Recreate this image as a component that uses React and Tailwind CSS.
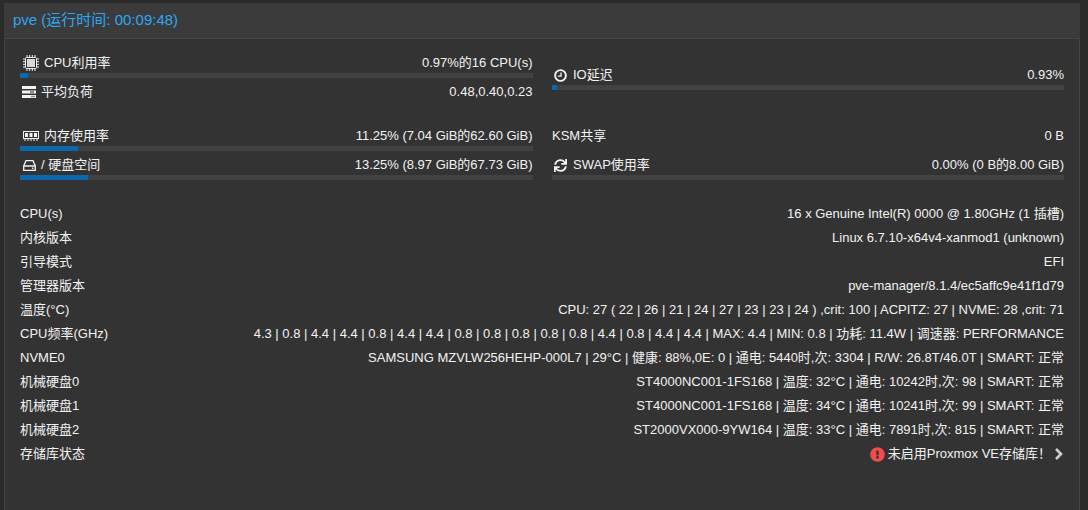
import { FaSync, FaExclamationCircle } from "react-icons/fa";

const fontStack = "font-['Liberation_Sans','Noto_Sans_CJK_SC',sans-serif]";

function ChipIcon() {
  return (
    <svg width="16" height="16" viewBox="0 0 16 16" className="ml-[3px] mr-[5px]">
      <rect x="2.5" y="2.5" width="11" height="11" rx="1" fill="#2f2f2f" stroke="#f2f2f2" />
      <rect x="4" y="4" width="8" height="8" fill="#d8d8d8" />
      <path d="M4 0v2M6.7 0v2M9.3 0v2M12 0v2M4 14v2M6.7 14v2M9.3 14v2M12 14v2M0 4h2M0 6.7h2M0 9.3h2M0 12h2M14 4h2M14 6.7h2M14 9.3h2M14 12h2" stroke="#f2f2f2" strokeWidth="1" />
    </svg>
  );
}

function LoadIcon() {
  return (
    <svg width="14" height="12" viewBox="0 0 14 12" className="ml-[2px] mr-[5px]">
      <rect y="0" width="14" height="3" fill="#f2f2f2" />
      <rect y="4.5" width="14" height="3" fill="#f2f2f2" />
      <rect y="9" width="14" height="3" fill="#f2f2f2" />
      <rect x="8" y="4.5" width="4" height="3" fill="#8a8a8a" />
      <rect x="9" y="9.8" width="4" height="1.4" fill="#8a8a8a" />
    </svg>
  );
}

function MemoryIcon() {
  return (
    <svg width="16" height="10" viewBox="0 0 16 10" className="ml-[3px] mr-[5px]">
      <rect x="0.5" y="0.5" width="15" height="7" fill="none" stroke="#f2f2f2" />
      <rect x="2" y="2" width="3" height="4" fill="#f2f2f2" />
      <rect x="6.5" y="2" width="3" height="4" fill="#f2f2f2" />
      <rect x="11" y="2" width="3" height="4" fill="#f2f2f2" />
      <path d="M2 8v2M5 8v2M8 8v2M11 8v2M14 8v2" stroke="#f2f2f2" />
    </svg>
  );
}

function DiskIcon() {
  return (
    <svg width="13" height="11" viewBox="0 0 13 11" className="ml-[3px] mr-[5px]">
      <path d="M3 .7h7l2.3 5.3v4.3H.7V6z M.7 6h11.6" fill="none" stroke="#f2f2f2" strokeWidth="1.3" />
      <rect x="9" y="7.6" width="1.5" height="1.3" fill="#f2f2f2" />
    </svg>
  );
}

function ClockIcon() {
  return (
    <svg width="13" height="13" viewBox="0 0 13 13" className="ml-[2px] mr-[6px]">
      <circle cx="6.5" cy="6.5" r="5.4" fill="none" stroke="#f2f2f2" strokeWidth="1.9" />
      <path d="M7 3.5v3.7H3.8" fill="none" stroke="#f2f2f2" strokeWidth="1.3" />
    </svg>
  );
}

function ChevronIcon() {
  return (
    <svg width="10" height="12" viewBox="0 0 10 12" className="ml-[3px]">
      <path d="M2 1l5 5-5 5" fill="none" stroke="#cfcfcf" strokeWidth="2.6" />
    </svg>
  );
}

function Meter({ icon, label, value, percent, short }) {
  return (
    <div className={short ? "h-[24px]" : "h-[29px]"}>
      <div className="flex h-[18px] items-center justify-between pt-[2px]">
        <span className="flex items-center">
          {icon}
          {label}
        </span>
        <span>{value}</span>
      </div>
      {percent !== undefined && (
        <div className="mt-[2px] h-[5px] bg-[#424242]">
          <div className="h-full bg-[#0b68ac]" style={{ width: `${percent}%` }} />
        </div>
      )}
    </div>
  );
}

const rows = [
  ["CPU(s)", "16 x Genuine Intel(R) 0000 @ 1.80GHz (1 插槽)"],
  ["内核版本", "Linux 6.7.10-x64v4-xanmod1 (unknown)"],
  ["引导模式", "EFI"],
  ["管理器版本", "pve-manager/8.1.4/ec5affc9e41f1d79"],
  ["温度(°C)", "CPU: 27 ( 22 | 26 | 21 | 24 | 27 | 23 | 23 | 24 ) ,crit: 100 | ACPITZ: 27 | NVME: 28 ,crit: 71"],
  ["CPU频率(GHz)", "4.3 | 0.8 | 4.4 | 4.4 | 0.8 | 4.4 | 4.4 | 0.8 | 0.8 | 0.8 | 0.8 | 0.8 | 4.4 | 0.8 | 4.4 | 4.4 | MAX: 4.4 | MIN: 0.8 | 功耗: 11.4W | 调速器: PERFORMANCE"],
  ["NVME0", "SAMSUNG MZVLW256HEHP-000L7 | 29°C | 健康: 88%,0E: 0 | 通电: 5440时,次: 3304 | R/W: 26.8T/46.0T | SMART: 正常"],
  ["机械硬盘0", "ST4000NC001-1FS168 | 温度: 32°C | 通电: 10242时,次: 98 | SMART: 正常"],
  ["机械硬盘1", "ST4000NC001-1FS168 | 温度: 34°C | 通电: 10241时,次: 99 | SMART: 正常"],
  ["机械硬盘2", "ST2000VX000-9YW164 | 温度: 33°C | 通电: 7891时,次: 815 | SMART: 正常"],
];

export default function App() {
  return (
    <div className={`h-[510px] w-[1088px] overflow-hidden bg-[#2b2b2b] pt-[3px] text-[13px] text-[#f2f2f2] ${fontStack}`}>
      <div className="ml-[4px] mr-[8px] flex h-[507px] flex-col bg-[#333333]">
        <div className="flex h-[35px] shrink-0 items-center bg-[#3b3b3b] pl-[9px] text-[15px] text-[#2ba7f5]">
          pve (运行时间: 00:09:48)
        </div>
        <div className="flex-1 border-x border-t border-[#454545] px-[15px] pt-[14px]">
          <div className="grid grid-cols-[512.5px_512px] gap-x-[19.5px]">
            <div>
              <Meter percent={1.5} icon={<ChipIcon />} label="CPU利用率" value="0.97%的16 CPU(s)" />
              <Meter short icon={<LoadIcon />} label="平均负荷" value="0.48,0.40,0.23" />
            </div>
            <div className="flex flex-col justify-center">
              <Meter percent={1} icon={<ClockIcon />} label="IO延迟" value="0.93%" />
            </div>
          </div>
          <div className="mt-[20px] grid grid-cols-[512.5px_512px] gap-x-[19.5px]">
            <div>
              <Meter percent={11.25} icon={<MemoryIcon />} label="内存使用率" value="11.25% (7.04 GiB的62.60 GiB)" />
              <Meter percent={13.25} icon={<DiskIcon />} label="/ 硬盘空间" value="13.25% (8.97 GiB的67.73 GiB)" />
            </div>
            <div>
              <Meter label="KSM共享" value="0 B" />
              <Meter percent={0} icon={<FaSync size={13} className="ml-[2px] mr-[6px] text-[#f2f2f2]" />} label="SWAP使用率" value="0.00% (0 B的8.00 GiB)" />
            </div>
          </div>
          <div className="mt-[17px]">
            {rows.map(([name, text]) => (
              <div key={name} className="flex h-[24px] items-center justify-between whitespace-nowrap pt-[2px]">
                <span>{name}</span>
                <span>{text}</span>
              </div>
            ))}
            <div className="flex h-[24px] items-center justify-between whitespace-nowrap pt-[2px]">
              <span>存储库状态</span>
              <span className="flex items-center">
                <FaExclamationCircle size={15} className="mr-[3px] text-[#f44b4b]" />
                未启用Proxmox VE存储库！
                <ChevronIcon />
              </span>
            </div>
          </div>
        </div>
      </div>
    </div>
  );
}
